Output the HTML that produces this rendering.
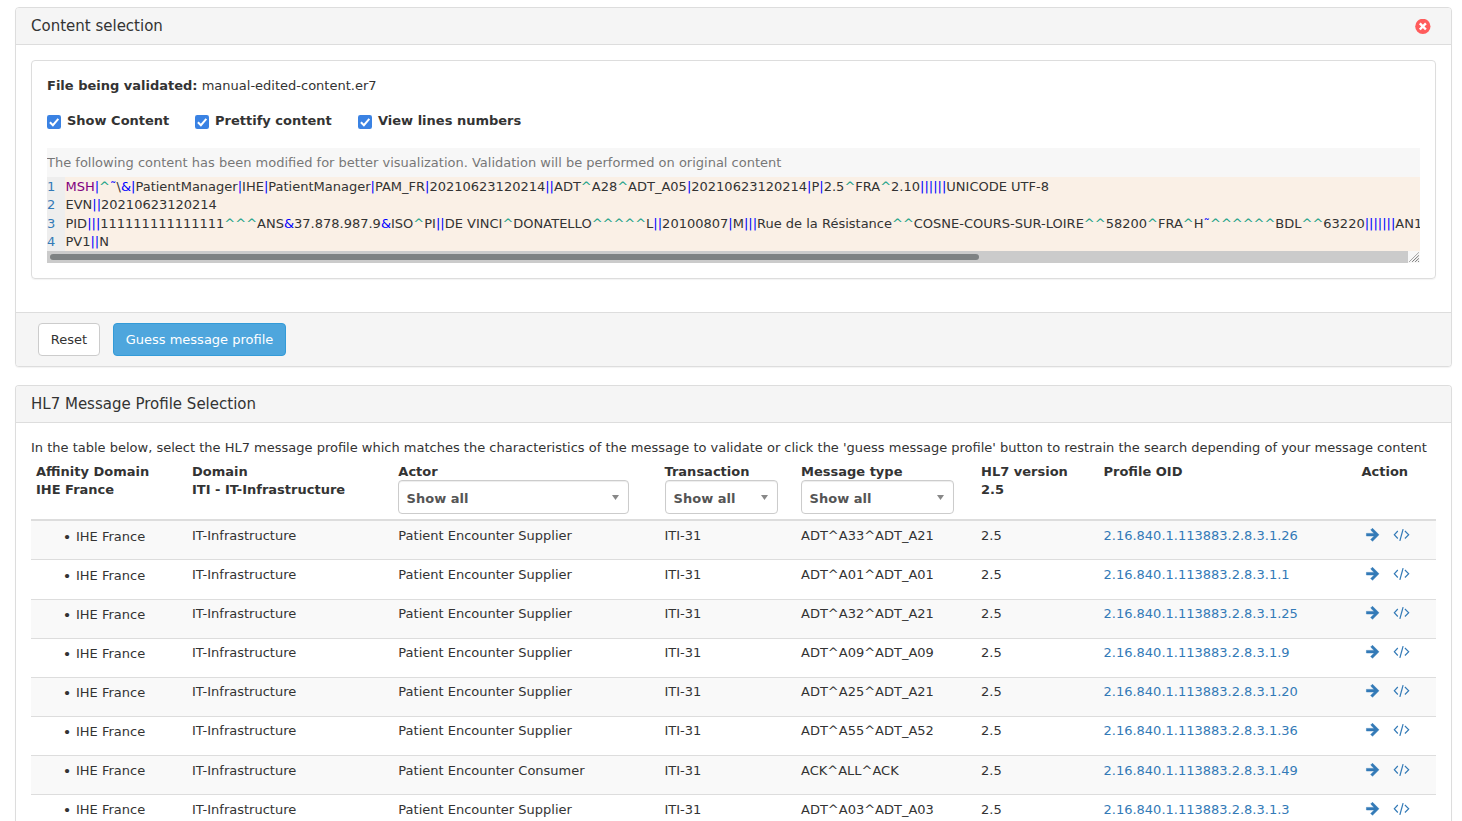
<!DOCTYPE html>
<html><head><meta charset="utf-8"><title>HL7 validation</title>
<style>
*{box-sizing:border-box}
html,body{margin:0;padding:0}
body{font-family:"DejaVu Sans","Liberation Sans",sans-serif;font-size:13px;line-height:1.42857;color:#333;background:#fff;width:1462px;height:821px;overflow:hidden;position:relative}
.panel{position:absolute;left:15px;width:1437px;border:1px solid #ddd;border-radius:4px;background:#fff;box-shadow:0 1px 1px rgba(0,0,0,.05)}
.ph{background:#f5f5f5;border-bottom:1px solid #ddd;padding:1px 15px 0;height:37px;border-radius:3px 3px 0 0;position:relative}
.ph h3{margin:0;font-size:15px;font-weight:normal;line-height:35px;color:#333}
.pf{background:#f5f5f5;border-top:1px solid #ddd;border-radius:0 0 3px 3px;position:absolute;left:0;right:0;top:304px;height:54px}
#p1{top:7px;height:360px}
#p2{top:385px;height:460px;border-bottom:none;border-radius:4px 4px 0 0}
.inner{position:absolute;left:15px;top:52px;width:1405px;height:219px;border:1px solid #ddd;border-radius:4px;box-shadow:0 1px 1px rgba(0,0,0,.05)}
.abs{position:absolute;white-space:nowrap}
b{font-weight:bold}
i{font-style:normal}
.cb{position:absolute;top:0;display:block}
.close{position:absolute;left:1399px;top:11px}
.pre{position:absolute;left:15px;top:87px;width:1373px;height:115px;background:#f7f7f7;overflow:hidden}
.note{position:absolute;left:0;top:6px;color:#777;white-space:nowrap}
.code{position:absolute;left:0;top:29px;width:1373px;height:74px;background:#faf0e6;overflow:hidden}
.gut{position:absolute;left:0;top:0;width:18px;height:74px;background:#eee;color:#337ab7}
.gut div,.ln{position:absolute;left:0;height:19px;line-height:19px;white-space:pre}
.l1{top:0px}.l2{top:18px}.l3{top:37px}.l4{top:55px}
.lines{position:absolute;left:18.45px;top:0}
.p{color:#0000ff}.c{color:#16a085}.s{color:#800080}
.sb{position:absolute;left:0;top:103px;width:1361px;height:12px;background:#cbcbcb}
.sb span{position:absolute;left:3px;top:3px;width:929px;height:6px;border-radius:3px;background:#7e8283}
.rz{position:absolute;left:1361px;top:103px;width:12px;height:12px;background:#f7f7f7}
.btn{position:absolute;top:10px;height:33px;line-height:31px;border:1px solid #ccc;border-radius:4px;text-align:center;font-size:13px;background:#fff;color:#333}
.btn.g{background:#4ea6dd;border-color:#339bd8;color:#fff}
table{position:absolute;left:15px;top:72px;width:1405px;border-collapse:separate;border-spacing:0;table-layout:fixed}
th{text-align:left;vertical-align:top;padding:5px 5px 0;height:63px;border-bottom:2px solid #ddd;font-weight:bold;line-height:18px;position:relative}
td{vertical-align:top;padding:5px;height:39px;border-bottom:1px solid #ddd;white-space:nowrap;position:relative}
tbody tr:nth-child(odd) td{background:#f9f9f9}
th:nth-child(7),td:nth-child(7),th:nth-child(8){padding-left:4.5px}
th:nth-child(3),td:nth-child(3){padding-left:5.33px}
th:nth-child(4),td:nth-child(4){padding-left:4.5px}
tbody tr:nth-child(1) td{padding-top:6px}
tbody tr:nth-child(2) td{padding-top:6px;height:40px}
ul{margin:1px 0 0;padding:0 0 0 40px;list-style:none}
li{position:relative}
li:before{content:"\2022";position:absolute;left:-13.2px;top:0.4px;font-size:14.6px;line-height:18.57px}
a{color:#337ab7;text-decoration:none}
.sel{position:absolute;top:22px;height:34px;padding-top:2px;border:1px solid #ccc;border-radius:4px;background:#fff;color:#555;font-weight:bold;line-height:32px;padding-left:7.6px;box-shadow:inset 0 1px 1px rgba(0,0,0,.075)}
.sel:after{content:"";position:absolute;right:9px;top:14px;width:7px;height:5px;background:#888;clip-path:polygon(0 0,100% 0,50% 100%)}
.ia{position:absolute;left:9px;top:6px}
.ic{position:absolute;left:36px;top:6px}
tbody tr:nth-child(-n+2) svg,tbody tr:nth-child(n+7) svg{top:7px}
tbody tr:nth-child(n+7) td{padding-top:6px}
tbody tr:nth-child(n+7) ul{margin-top:0}
</style></head><body>
<div class="panel" id="p1">
 <div class="ph"><h3>Content selection</h3>
  <svg class="close" viewBox="0 0 16 16" width="16" height="16"><circle cx="7.85" cy="7.4" r="7.65" fill="#ff5c5c"/><path d="M4.8 4.4 L10.9 10.5 M10.9 4.4 L4.8 10.5" stroke="#fff" stroke-width="2.4" fill="none"/></svg>
 </div>
 <div class="inner">
  <div class="abs" style="left:15px;top:16px"><b>File being validated:</b> manual-edited-content.er7</div>
  <div class="abs" style="left:15px;top:50px;font-weight:bold"><span style="position:absolute;left:0;top:4px"><svg class="cb" viewBox="0 0 14 14" width="14" height="14"><rect width="14" height="14" rx="2.2" fill="#3a82e3"/><path d="M2.9 7.2 L5.9 10.2 L11.3 3.9" fill="none" stroke="#fff" stroke-width="2"/></svg></span><span style="position:absolute;left:20px;top:1px">Show Content</span></div>
  <div class="abs" style="left:163px;top:50px;font-weight:bold"><span style="position:absolute;left:0;top:4px"><svg class="cb" viewBox="0 0 14 14" width="14" height="14"><rect width="14" height="14" rx="2.2" fill="#3a82e3"/><path d="M2.9 7.2 L5.9 10.2 L11.3 3.9" fill="none" stroke="#fff" stroke-width="2"/></svg></span><span style="position:absolute;left:20px;top:1px">Prettify content</span></div>
  <div class="abs" style="left:326px;top:50px;font-weight:bold"><span style="position:absolute;left:0;top:4px"><svg class="cb" viewBox="0 0 14 14" width="14" height="14"><rect width="14" height="14" rx="2.2" fill="#3a82e3"/><path d="M2.9 7.2 L5.9 10.2 L11.3 3.9" fill="none" stroke="#fff" stroke-width="2"/></svg></span><span style="position:absolute;left:20px;top:1px">View lines numbers</span></div>
  <div class="pre">
   <div class="note">The following content has been modified for better visualization. Validation will be performed on original content</div>
   <div class="code">
    <div class="gut"><div class="l1">1</div><div class="l2">2</div><div class="l3">3</div><div class="l4">4</div></div>
    <div class="lines"><div class="ln l1"><i class="s">MSH</i><i class="p">|</i><i class="c">^</i><i class="p">˜</i>\<i class="p">&amp;|</i>PatientManager<i class="p">|</i>IHE<i class="p">|</i>PatientManager<i class="p">|</i>PAM_FR<i class="p">|</i>20210623120214<i class="p">||</i>ADT<i class="c">^</i>A28<i class="c">^</i>ADT_A05<i class="p">|</i>20210623120214<i class="p">|</i>P<i class="p">|</i>2.5<i class="c">^</i>FRA<i class="c">^</i>2.10<i class="p">||||||</i>UNICODE UTF-8</div><div class="ln l2">EVN<i class="p">||</i>20210623120214</div><div class="ln l3">PID<i class="p">|||</i>111111111111111<i class="c">^^^</i>ANS<i class="p">&amp;</i>37.878.987.9<i class="p">&amp;</i>ISO<i class="c">^</i>PI<i class="p">||</i>DE VINCI<i class="c">^</i>DONATELLO<i class="c">^^^^^</i>L<i class="p">||</i>20100807<i class="p">|</i>M<i class="p">|||</i>Rue de la Résistance<i class="c">^^</i>COSNE-COURS-SUR-LOIRE<i class="c">^^</i>58200<i class="c">^</i>FRA<i class="c">^</i>H<i class="p">˜</i><i class="c">^^^^^^</i>BDL<i class="c">^^</i>63220<i class="p">|||||||</i>AN1234567<i class="c">^^^</i></div><div class="ln l4">PV1<i class="p">||</i>N</div></div>
   </div>
   <div class="sb"><span></span></div>
   <div class="rz"><svg width="12" height="12" viewBox="0 0 12 12" style="display:block"><path d="M1.1 10.9 L10.9 1.3" stroke="#999" stroke-width="0.9" fill="none"/><path d="M4.2 10.8 L10.9 4.4 M7.2 10.8 L10.9 7.4 M10 10.9 L10.9 10.1" stroke="#666" stroke-width="0.9" fill="none"/></svg></div>
  </div>
 </div>
 <div class="pf">
  <div class="btn" style="left:22px;width:62px">Reset</div>
  <div class="btn g" style="left:97px;width:173px">Guess message profile</div>
 </div>
</div>
<div class="panel" id="p2">
 <div class="ph"><h3>HL7 Message Profile Selection</h3></div>
 <div class="abs" style="left:15px;top:53px">In the table below, select the HL7 message profile which matches the characteristics of the message to validate or click the 'guess message profile' button to restrain the search depending of your message content</div>
 <table>
  <colgroup><col style="width:156px"><col style="width:206px"><col style="width:267px"><col style="width:136px"><col style="width:180px"><col style="width:123px"><col style="width:258px"><col style="width:79px"></colgroup>
  <thead><tr>
   <th>Affinity Domain<br>IHE France</th>
   <th>Domain<br>ITI - IT-Infrastructure</th>
   <th>Actor<div class="sel" style="left:5px;width:231px">Show all</div></th>
   <th>Transaction<div class="sel" style="left:5px;width:113px">Show all</div></th>
   <th>Message type<div class="sel" style="left:5px;width:153px">Show all</div></th>
   <th>HL7 version<br>2.5</th>
   <th>Profile OID</th>
   <th>Action</th>
  </tr></thead>
  <tbody>
<tr><td><ul><li>IHE France</li></ul></td><td>IT-Infrastructure</td><td>Patient Encounter Supplier</td><td>ITI-31</td><td>ADT^A33^ADT_A21</td><td>2.5</td><td><a>2.16.840.1.113883.2.8.3.1.26</a></td><td><svg class="ia" viewBox="0 0 14 14" width="14" height="14" style="overflow:visible"><path d="M6.484 0.266 L12.968 6.75 L6.484 13.234 L4.716 11.466 L8.232 7.95 H0.45 V5.4 H8.082 L4.716 2.034 Z" fill="#337ab7" stroke="#337ab7" stroke-width="0.55" stroke-linejoin="round"/></svg><svg class="ic" viewBox="0 0 17 14" width="17" height="14"><path d="M4.8 3 L1.3 6.75 L4.8 10.5 M11.9 3 L15.7 6.75 L11.9 10.5" fill="none" stroke="#337ab7" stroke-width="1.15"/><path d="M10.1 1.1 L6.85 12.8" fill="none" stroke="#337ab7" stroke-width="1.25"/></svg></td></tr>
<tr><td><ul><li>IHE France</li></ul></td><td>IT-Infrastructure</td><td>Patient Encounter Supplier</td><td>ITI-31</td><td>ADT^A01^ADT_A01</td><td>2.5</td><td><a>2.16.840.1.113883.2.8.3.1.1</a></td><td><svg class="ia" viewBox="0 0 14 14" width="14" height="14" style="overflow:visible"><path d="M6.484 0.266 L12.968 6.75 L6.484 13.234 L4.716 11.466 L8.232 7.95 H0.45 V5.4 H8.082 L4.716 2.034 Z" fill="#337ab7" stroke="#337ab7" stroke-width="0.55" stroke-linejoin="round"/></svg><svg class="ic" viewBox="0 0 17 14" width="17" height="14"><path d="M4.8 3 L1.3 6.75 L4.8 10.5 M11.9 3 L15.7 6.75 L11.9 10.5" fill="none" stroke="#337ab7" stroke-width="1.15"/><path d="M10.1 1.1 L6.85 12.8" fill="none" stroke="#337ab7" stroke-width="1.25"/></svg></td></tr>
<tr><td><ul><li>IHE France</li></ul></td><td>IT-Infrastructure</td><td>Patient Encounter Supplier</td><td>ITI-31</td><td>ADT^A32^ADT_A21</td><td>2.5</td><td><a>2.16.840.1.113883.2.8.3.1.25</a></td><td><svg class="ia" viewBox="0 0 14 14" width="14" height="14" style="overflow:visible"><path d="M6.484 0.266 L12.968 6.75 L6.484 13.234 L4.716 11.466 L8.232 7.95 H0.45 V5.4 H8.082 L4.716 2.034 Z" fill="#337ab7" stroke="#337ab7" stroke-width="0.55" stroke-linejoin="round"/></svg><svg class="ic" viewBox="0 0 17 14" width="17" height="14"><path d="M4.8 3 L1.3 6.75 L4.8 10.5 M11.9 3 L15.7 6.75 L11.9 10.5" fill="none" stroke="#337ab7" stroke-width="1.15"/><path d="M10.1 1.1 L6.85 12.8" fill="none" stroke="#337ab7" stroke-width="1.25"/></svg></td></tr>
<tr><td><ul><li>IHE France</li></ul></td><td>IT-Infrastructure</td><td>Patient Encounter Supplier</td><td>ITI-31</td><td>ADT^A09^ADT_A09</td><td>2.5</td><td><a>2.16.840.1.113883.2.8.3.1.9</a></td><td><svg class="ia" viewBox="0 0 14 14" width="14" height="14" style="overflow:visible"><path d="M6.484 0.266 L12.968 6.75 L6.484 13.234 L4.716 11.466 L8.232 7.95 H0.45 V5.4 H8.082 L4.716 2.034 Z" fill="#337ab7" stroke="#337ab7" stroke-width="0.55" stroke-linejoin="round"/></svg><svg class="ic" viewBox="0 0 17 14" width="17" height="14"><path d="M4.8 3 L1.3 6.75 L4.8 10.5 M11.9 3 L15.7 6.75 L11.9 10.5" fill="none" stroke="#337ab7" stroke-width="1.15"/><path d="M10.1 1.1 L6.85 12.8" fill="none" stroke="#337ab7" stroke-width="1.25"/></svg></td></tr>
<tr><td><ul><li>IHE France</li></ul></td><td>IT-Infrastructure</td><td>Patient Encounter Supplier</td><td>ITI-31</td><td>ADT^A25^ADT_A21</td><td>2.5</td><td><a>2.16.840.1.113883.2.8.3.1.20</a></td><td><svg class="ia" viewBox="0 0 14 14" width="14" height="14" style="overflow:visible"><path d="M6.484 0.266 L12.968 6.75 L6.484 13.234 L4.716 11.466 L8.232 7.95 H0.45 V5.4 H8.082 L4.716 2.034 Z" fill="#337ab7" stroke="#337ab7" stroke-width="0.55" stroke-linejoin="round"/></svg><svg class="ic" viewBox="0 0 17 14" width="17" height="14"><path d="M4.8 3 L1.3 6.75 L4.8 10.5 M11.9 3 L15.7 6.75 L11.9 10.5" fill="none" stroke="#337ab7" stroke-width="1.15"/><path d="M10.1 1.1 L6.85 12.8" fill="none" stroke="#337ab7" stroke-width="1.25"/></svg></td></tr>
<tr><td><ul><li>IHE France</li></ul></td><td>IT-Infrastructure</td><td>Patient Encounter Supplier</td><td>ITI-31</td><td>ADT^A55^ADT_A52</td><td>2.5</td><td><a>2.16.840.1.113883.2.8.3.1.36</a></td><td><svg class="ia" viewBox="0 0 14 14" width="14" height="14" style="overflow:visible"><path d="M6.484 0.266 L12.968 6.75 L6.484 13.234 L4.716 11.466 L8.232 7.95 H0.45 V5.4 H8.082 L4.716 2.034 Z" fill="#337ab7" stroke="#337ab7" stroke-width="0.55" stroke-linejoin="round"/></svg><svg class="ic" viewBox="0 0 17 14" width="17" height="14"><path d="M4.8 3 L1.3 6.75 L4.8 10.5 M11.9 3 L15.7 6.75 L11.9 10.5" fill="none" stroke="#337ab7" stroke-width="1.15"/><path d="M10.1 1.1 L6.85 12.8" fill="none" stroke="#337ab7" stroke-width="1.25"/></svg></td></tr>
<tr><td><ul><li>IHE France</li></ul></td><td>IT-Infrastructure</td><td>Patient Encounter Consumer</td><td>ITI-31</td><td>ACK^ALL^ACK</td><td>2.5</td><td><a>2.16.840.1.113883.2.8.3.1.49</a></td><td><svg class="ia" viewBox="0 0 14 14" width="14" height="14" style="overflow:visible"><path d="M6.484 0.266 L12.968 6.75 L6.484 13.234 L4.716 11.466 L8.232 7.95 H0.45 V5.4 H8.082 L4.716 2.034 Z" fill="#337ab7" stroke="#337ab7" stroke-width="0.55" stroke-linejoin="round"/></svg><svg class="ic" viewBox="0 0 17 14" width="17" height="14"><path d="M4.8 3 L1.3 6.75 L4.8 10.5 M11.9 3 L15.7 6.75 L11.9 10.5" fill="none" stroke="#337ab7" stroke-width="1.15"/><path d="M10.1 1.1 L6.85 12.8" fill="none" stroke="#337ab7" stroke-width="1.25"/></svg></td></tr>
<tr><td><ul><li>IHE France</li></ul></td><td>IT-Infrastructure</td><td>Patient Encounter Supplier</td><td>ITI-31</td><td>ADT^A03^ADT_A03</td><td>2.5</td><td><a>2.16.840.1.113883.2.8.3.1.3</a></td><td><svg class="ia" viewBox="0 0 14 14" width="14" height="14" style="overflow:visible"><path d="M6.484 0.266 L12.968 6.75 L6.484 13.234 L4.716 11.466 L8.232 7.95 H0.45 V5.4 H8.082 L4.716 2.034 Z" fill="#337ab7" stroke="#337ab7" stroke-width="0.55" stroke-linejoin="round"/></svg><svg class="ic" viewBox="0 0 17 14" width="17" height="14"><path d="M4.8 3 L1.3 6.75 L4.8 10.5 M11.9 3 L15.7 6.75 L11.9 10.5" fill="none" stroke="#337ab7" stroke-width="1.15"/><path d="M10.1 1.1 L6.85 12.8" fill="none" stroke="#337ab7" stroke-width="1.25"/></svg></td></tr>
  </tbody>
 </table>
</div>
</body></html>
